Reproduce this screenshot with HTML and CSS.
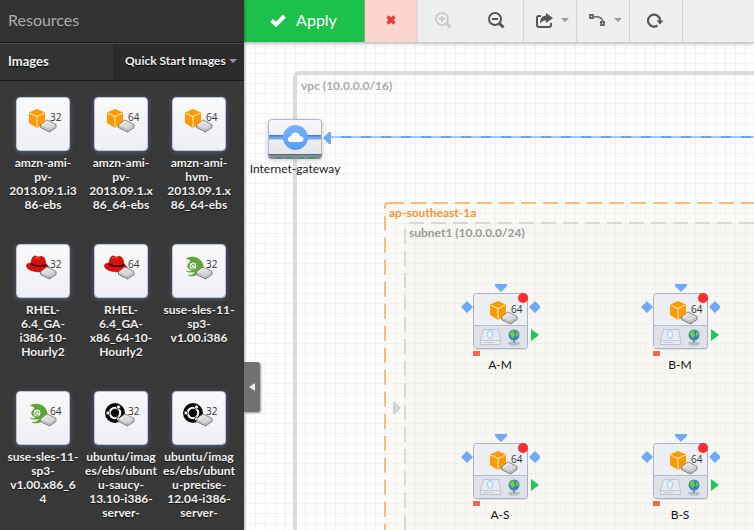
FILE: index.html
```
<!DOCTYPE html>
<html lang="en">
<head>
<meta charset="utf-8">
<title>VPC Designer</title>
<link rel="stylesheet" href="styles.css">
</head>
<body>
<svg class="defs" aria-hidden="true">
  <defs>
    <linearGradient id="face" x1="0" y1="0" x2="0" y2="1"><stop offset="0" stop-color="#f7f8fb"/><stop offset="1" stop-color="#e2e4e9"/></linearGradient>
    <linearGradient id="cloud-bg" x1="0" y1="0" x2="0" y2="1"><stop offset="0" stop-color="#78b0fb"/><stop offset="1" stop-color="#5b9cf8"/></linearGradient>
    <linearGradient id="metal" x1="0" y1="0" x2="1" y2="1"><stop offset="0" stop-color="#f6f6f6"/><stop offset="1" stop-color="#cacaca"/></linearGradient>
  </defs>
  <symbol id="drive" viewBox="0 0 54 54">
    <path d="M24.500 28 L31 23 L40 27.500 L40 30.500 L33.500 35 L24.500 30.500 Z" fill="#c4c4c4" stroke="#808080" stroke-linejoin="round"/>
    <path d="M25 28 L31 23.500 L39.500 27.700 L33.500 32 Z" fill="url(#metal)"/>
    <path d="M28 28.200 L31.200 25.800 L36.500 28.200 L33.200 30.400 Z" fill="#dadada"/>
    <path d="M33.500 32.500 V34.500" stroke="#999"/>
  </symbol>
  <symbol id="amazon" viewBox="0 0 54 54">
    <path d="M21 12 L29 15.500 V26 L21 31 L13 26 V15.500 Z" fill="#ff9900"/>
    <path d="M13.500 16 L21 19.500 L28.500 16 M21 19.500 V30.500" fill="none" stroke="#ffe3b5" stroke-width="1.200"/>
    <use href="#drive"/>
  </symbol>
  <symbol id="redhat" viewBox="0 0 54 54">
    <path d="M10.500 22 C10.500 19 14 19.500 15 19 C16 14 17 12 19 12 C21 12 21 13.500 23 13 C26 12 28 12.500 29 16 L30 20 C33 22 34 24 32 27 C27 29 11 28 10.500 22 Z" fill="#e00d08" stroke="#730604" stroke-width=".6"/>
    <path d="M15 18.500 C18 21.500 25 22.500 30 20 L30.300 22 C24 24.500 16 22 14.500 20.500 Z" fill="#1d0d0b"/>
    <path d="M18 14 C20 13 22 15 24 14" fill="none" stroke="#f65a4b"/>
    <use href="#drive"/>
  </symbol>
  <symbol id="suse" viewBox="0 0 54 54">
    <path d="M13.500 15 C18 11 28 12 31 20 C32 23 31 27 29 29 L25 31 C21 33 15 32.500 16 30.500 C19 32 22 30 23 28 C19 29.500 14 28 13.500 26.500 C17 28 20 27 19 26 C15 25 14 21 17 19 C20 16.500 17 15 13.500 15 Z" fill="#61a536"/>
    <circle cx="21" cy="22" r="4" fill="#f3f8ee" stroke="#61a536"/>
    <path d="M22.500 24 C20 25 18.500 22.500 20 21 C21.500 19.800 23.500 21.500 22 22.500" fill="none" stroke="#478b29"/>
    <use href="#drive"/>
  </symbol>
  <symbol id="ubuntu" viewBox="0 0 54 54">
    <circle cx="21" cy="22" r="10" fill="#0b0b0b"/>
    <circle cx="21" cy="22" r="5.200" fill="none" stroke="#fff" stroke-width="2"/>
    <g fill="#fff" stroke="#0b0b0b" stroke-width=".8"><circle cx="14" cy="22" r="2"/><circle cx="24.500" cy="16" r="2"/><circle cx="24.500" cy="28" r="2"/></g>
    <use href="#drive"/>
  </symbol>
  <symbol id="instance" viewBox="0 0 80 76">
    <path d="M35 1 H47 V3 L41 9 L35 3 Z M7 18 L13 24 L7 30 L1 24 Z M75 18 L81 24 L75 30 L69 24 Z" fill="#6eaaf9"/>
    <path d="M71 46 L79 52 L71 58 Z" fill="#16cd55"/>
    <rect x="13" y="68" width="7" height="5" fill="#f1694d"/>
    <rect x="14" y="12" width="54" height="55" rx="3" fill="#8d98a8" opacity=".25"/>
    <rect x="13.500" y="10.500" width="54" height="55" rx="3" fill="#eeeff2" stroke="#aab4c6"/>
    <path d="M14 43 H67 V63 Q67 65 65 65 H16 Q14 65 14 63 Z" fill="#dfe2e8"/>
    <path d="M14 42.500 H67" stroke="#b3bccb"/>
    <use href="#amazon" x="17" y="6" width="54" height="54"/>
    <path d="M23.500 46.500 H38.500 L40.500 57 V61.500 H20.500 V57 Z" fill="#e6eaf0" stroke="#bec5d0"/>
    <path d="M20.500 57.500 H40.500 M24 59.500 H34" fill="none" stroke="#c6ccd6"/>
    <ellipse cx="30" cy="51.500" rx="2.500" ry="4" fill="#edf4ff" stroke="#9fc6f8"/>
    <ellipse cx="54" cy="60.500" rx="6" ry="2" fill="#b4bbc2"/><path d="M53 56 H55 V60 H53 Z" fill="#87939d"/>
    <circle cx="54" cy="52" r="5.500" fill="#3a82c8"/>
    <path d="M49.500 51 Q50.500 47 54.500 47.500 L54 50 L55.500 52 L52.500 55.500 L51 53 Z M56 48.500 L58.500 50 L58 54 L56 52 Z" fill="#6fcf35"/>
    <circle cx="63" cy="15" r="5" fill="#fa2c31"/>
  </symbol>
</svg>

<div class="app">
  <aside class="sidebar">
    <h1 class="sidebar-title">Resources</h1>
    <div class="filter">
      <label class="filter-label" for="source">Images</label>
      <div class="filter-box">
        <select class="filter-select" id="source"><option>Quick Start Images</option></select>
        <span class="caret"></span>
      </div>
    </div>
    <ul class="images">
      <li class="image"><div class="tile"><svg class="tile-icon"><use href="#amazon"/></svg><span class="bits">32</span></div>amzn-ami-<br>pv-<br>2013.09.1.i3<br>86-ebs</li>
      <li class="image"><div class="tile"><svg class="tile-icon"><use href="#amazon"/></svg><span class="bits">64</span></div>amzn-ami-<br>pv-<br>2013.09.1.x<br>86_64-ebs</li>
      <li class="image"><div class="tile"><svg class="tile-icon"><use href="#amazon"/></svg><span class="bits">64</span></div>amzn-ami-<br>hvm-<br>2013.09.1.x<br>86_64-ebs</li>
      <li class="image"><div class="tile"><svg class="tile-icon"><use href="#redhat"/></svg><span class="bits">32</span></div>RHEL-<br>6.4_GA-<br>i386-10-<br>Hourly2</li>
      <li class="image"><div class="tile"><svg class="tile-icon"><use href="#redhat"/></svg><span class="bits">64</span></div>RHEL-<br>6.4_GA-<br>x86_64-10-<br>Hourly2</li>
      <li class="image"><div class="tile"><svg class="tile-icon"><use href="#suse"/></svg><span class="bits">32</span></div>suse-sles-11-<br>sp3-<br>v1.00.i386</li>
      <li class="image"><div class="tile"><svg class="tile-icon"><use href="#suse"/></svg><span class="bits">64</span></div>suse-sles-11-<br>sp3-<br>v1.00.x86_6<br>4</li>
      <li class="image"><div class="tile"><svg class="tile-icon"><use href="#ubuntu"/></svg><span class="bits">32</span></div>ubuntu/imag<br>es/ebs/ubunt<br>u-saucy-<br>13.10-i386-<br>server-</li>
      <li class="image"><div class="tile"><svg class="tile-icon"><use href="#ubuntu"/></svg><span class="bits">32</span></div>ubuntu/imag<br>es/ebs/ubunt<br>u-precise-<br>12.04-i386-<br>server-</li>
    </ul>
    <button class="collapse" aria-label="Collapse panel"><svg width="6" height="8"><path d="M6 0 V8 L0 4 Z" fill="#eee"/></svg></button>
  </aside>

  <main class="main">
    <div class="toolbar">
      <button class="tool apply"><svg width="16" height="13" viewBox="0 0 16 13"><path d="M1.500 6.500 L6 10.500 L14.500 2" fill="none" stroke="#fff" stroke-width="4"/></svg>Apply</button>
      <button class="tool cancel" aria-label="Discard"><svg width="10" height="10" viewBox="0 0 10 10"><path d="M1.500 1.500 L8.500 8.500 M8.500 1.500 L1.500 8.500" stroke="#ed3a35" stroke-width="3.400"/></svg></button>
      <button class="tool plain" aria-label="Zoom in" disabled><svg width="17" height="17" viewBox="0 0 17 17" fill="none" stroke="#ccc" stroke-width="2"><circle cx="7" cy="7" r="6"/><path d="M4 7 H10 M7 4 V10"/><path d="M11.500 11.500 L15.500 15.500" stroke-width="3"/></svg></button>
      <button class="tool" aria-label="Zoom out"><svg width="17" height="17" viewBox="0 0 17 17" fill="none" stroke="#555" stroke-width="2"><circle cx="7" cy="7" r="6"/><path d="M4 7 H10"/><path d="M11.500 11.500 L15.500 15.500" stroke-width="3"/></svg></button>
      <button class="tool menu" aria-label="Export"><svg width="17" height="15" viewBox="0 0 17 15"><path d="M5 3 H3 Q1 3 1 5 V12 Q1 14 3 14 H13 Q15 14 15 12 V10" fill="none" stroke="#555" stroke-width="2"/><path d="M10 0 L17 5 L10 10 V7.500 Q6 7 4 11 Q3.500 3 10 2.500 Z" fill="#555"/></svg><span class="caret"></span></button>
      <button class="tool menu" aria-label="Line style"><svg width="17" height="13" viewBox="0 0 17 13" fill="none" stroke="#666"><path d="M5 3 Q13 2 14 8" stroke-width="1.500"/><path d="M1 1 H4 V4 H1 Z M12 8 H15 V11 H12 Z" stroke-width="1.800"/></svg><span class="caret"></span></button>
      <button class="tool" aria-label="Refresh"><svg width="17" height="15" viewBox="0 0 17 15"><path d="M10.500 12.500 A6 6 0 1 1 13 8" fill="none" stroke="#555" stroke-width="2.200"/><path d="M9.500 7.500 H16.500 L13 11.500 Z" fill="#555"/></svg></button>
    </div>

    <div class="canvas">
      <section class="group vpc"><h2 class="group-name">vpc (10.0.0.0/16)</h2></section>
      <section class="group zone"><h2 class="group-name">ap-southeast-1a</h2></section>
      <section class="group subnet"><h2 class="group-name">subnet1 (10.0.0.0/24)</h2></section>
      <svg class="wires" aria-hidden="true">
        <g fill="none" stroke-width="2" stroke-dasharray="15 7">
          <path d="M145 160 H2000" stroke="#fbbd72"/>
          <path d="M145 160 Q141 160 141 164 V2000" stroke="#fbbd72" stroke-dashoffset="7"/>
          <path d="M165 180 H2000" stroke="#d8d8d8"/>
          <path d="M161 186 V2000" stroke="#d8d8d8"/>
        </g>
        <path d="M149 359 H151 L157 365 L151 371 H149 Z" fill="#d4d4d4"/>
        <path d="M87 94 H2000" stroke="#a0c8fb" stroke-width="2"/>
        <path d="M97 94 H2000" stroke="#64a5f9" stroke-width="2" stroke-dasharray="10 10"/>
        <path d="M79 95 L85 89 H87 V101 H85 Z" fill="#6eaaf9"/>
      </svg>

      <figure class="gateway">
        <svg width="54" height="41" viewBox="0 0 54 41">
          <rect x="0.500" y="0.500" width="53" height="39" rx="3" fill="url(#face)" stroke="#b5b9c6"/>
          <path d="M1 17 H53" stroke="#577ab1" stroke-width="2"/><path d="M1 19 H53" stroke="#6daafa" stroke-width="3"/>
          <path d="M0 35 H54 Q54 40 50 40 H4 Q0 40 0 35 Z" fill="#858b98"/><path d="M0 35.500 H54" stroke="#626875"/>
          <path d="M8 39 H48" stroke="#2ba35c" stroke-width="1.500" stroke-dasharray="6 5"/>
          <circle cx="27.500" cy="18.500" r="12.500" fill="url(#cloud-bg)"/>
          <path d="M22 23 Q19.500 22 20 19.500 Q20.500 17 23 17.200 Q24 13 28 13.500 Q31.500 14 32 17.200 Q35.500 17 35.500 20.200 Q35 23 32 23 Z" fill="#fff"/>
        </svg>
        <figcaption>Internet-gateway</figcaption>
      </figure>

      <figure class="node col-a row-m"><svg class="node-icon"><use href="#instance"/></svg><span class="bits">64</span><figcaption>A-M</figcaption></figure>
      <figure class="node col-b row-m"><svg class="node-icon"><use href="#instance"/></svg><span class="bits">64</span><figcaption>B-M</figcaption></figure>
      <figure class="node col-a row-s"><svg class="node-icon"><use href="#instance"/></svg><span class="bits">64</span><figcaption>A-S</figcaption></figure>
      <figure class="node col-b row-s"><svg class="node-icon"><use href="#instance"/></svg><span class="bits">64</span><figcaption>B-S</figcaption></figure>
    </div>
  </main>
</div>
</body>
</html>
```
FILE: styles.css
```
* { box-sizing: border-box; }
body { margin: 0; font: 12px/14px Lato, sans-serif; color: #222; }
h1, h2, ul, figure { margin: 0; padding: 0; }
button, select { font: inherit; border: 0; border-radius: 0; padding: 0; cursor: pointer; }
.defs { position: absolute; width: 0; height: 0; }
.app { display: grid; grid-template-columns: 244px minmax(0, 1fr); height: 100vh; overflow: hidden; }

.sidebar { position: relative; z-index: 2; min-height: 0; background: #383838; color: #f2f2f2; box-shadow: 0 0 3px rgba(0, 0, 0, .5); }
.sidebar-title { height: 43px; padding-left: 8px; background: #323232; border-bottom: 1px solid #1e1e1e; color: #aaa; font-size: 16px; font-weight: 400; line-height: 40px; }
.filter { display: flex; height: 38px; background: #323232; border-top: 1px solid #484848; border-bottom: 1px solid #1c1c1c; font-weight: 700; text-shadow: 0 1px 1px #000; }
.filter-label { flex: 1; padding-left: 8px; font-size: 13px; line-height: 34px; }
.filter-box { display: flex; align-items: center; width: 130px; padding: 0 7px 2px 10px; background: #2c2c2c; border-left: 1px solid #222; }
.filter-select { flex: 1; min-width: 0; appearance: none; background: transparent; color: #f2f2f2; text-shadow: inherit; }
.caret { flex: none; border: 4px solid transparent; border-top-color: #999; border-bottom: 0; }

.images { display: grid; grid-template-columns: repeat(3, 78px); grid-auto-rows: 147px; padding: 16px 0 0 4px; list-style: none; }
.image { font-weight: 700; text-align: center; white-space: nowrap; text-shadow: 0 1px 1px #111; }
.tile { position: relative; width: 54px; height: 54px; margin: 0 auto 5px; border: 1px solid #b9c4d6; border-radius: 4px; background: linear-gradient(#fafafc, #eeeff3); box-shadow: 0 1px 4px #56657d; text-shadow: none; }
.tile-icon { display: block; width: 54px; height: 54px; margin: -1px; }
.bits { position: absolute; left: 33px; top: 12px; color: #333; font: 10px/14px "Open Sans", sans-serif; }
.collapse { position: absolute; left: 100%; top: 362px; width: 16px; height: 50px; display: grid; place-items: center; background: #727272; border-radius: 0 3px 3px 0; box-shadow: 1px 1px 2px rgba(0, 0, 0, .4); }

.main { display: flex; flex-direction: column; min-width: 0; min-height: 0; }
.toolbar { position: relative; z-index: 1; display: flex; flex: none; height: 43px; background: #efefef; border-bottom: 1px solid #c8c8c8; box-shadow: 0 1px 4px rgba(0, 0, 0, .2); }
.tool { display: flex; align-items: center; justify-content: center; width: 53px; padding: 0 1px 2px 0; background: transparent; border-right: 1px solid #d5d5d5; }
.plain { border-right-color: transparent; }
.menu { gap: 8px; padding-left: 6px; }
.apply { width: 121px; gap: 10px; background: #1bc14b; color: #fff; font-size: 16px; border-right-color: #91a08c; }
.cancel { background: #fbd5ce; }

.canvas { position: relative; flex: 1; overflow: hidden; background: linear-gradient(90deg, #f2f2f2 1px, transparent 1px) 1px 0 / 10px 10px, linear-gradient(#f2f2f2 1px, transparent 1px) 0 0 / 10px 10px, #fff; }
.group { position: absolute; right: -10px; bottom: -10px; }
.group-name { font-size: 12px; line-height: 14px; }
.vpc { left: 49px; top: 28px; padding: 4px; border: 4px solid #dadbdb; border-radius: 6px; background: rgba(244, 244, 244, .2); color: #aaa; }
.zone { left: 141px; top: 160px; padding: 3px 4px; background: rgba(250, 240, 220, .2); color: #f7962e; }
.subnet { left: 161px; top: 180px; padding: 3px 4px; background: rgba(230, 230, 222, .1); color: #999; }
.wires { position: absolute; inset: 0; width: 100%; height: 100%; }
.gateway { position: absolute; left: 1px; top: 76px; width: 100px; text-align: center; }
.gateway svg { display: block; margin: 0 auto 2px; filter: drop-shadow(0 1px 2px rgba(70, 80, 110, .3)); }
.node { position: absolute; width: 80px; text-align: center; color: #111; }
.node-icon { display: block; width: 80px; height: 76px; overflow: visible; }
.node .bits { left: 51px; top: 19px; }
.node figcaption { line-height: 12px; }
.col-a { left: 216px; }
.col-b { left: 396px; }
.row-m { top: 240px; }
.row-s { top: 390px; }
```
